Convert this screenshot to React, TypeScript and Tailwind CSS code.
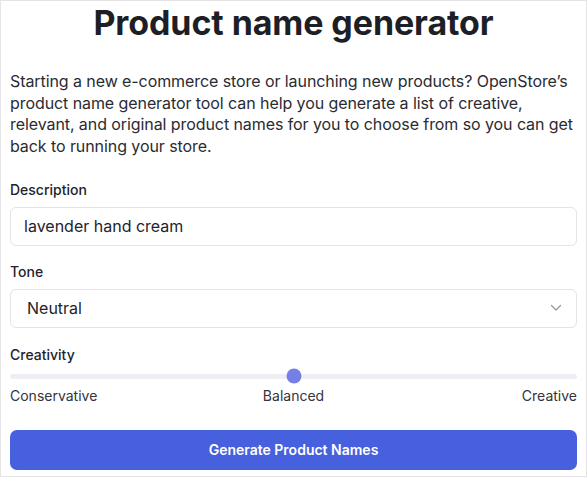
import React from 'react';

export default function App() {
  return (
    <div className="h-[477px] w-[587px] overflow-hidden border border-[#e6e3e6] bg-white font-['Inter',sans-serif] text-[#23232b]">
      <div className="px-[9px]">
        <h1 className="mt-[2px] text-center text-[34px] font-bold leading-[40px] tracking-[-0.1px] text-[#1e1f26]">
          Product name generator
        </h1>
        <p className="mt-[28px] text-[16px] leading-[21.7px] tracking-[-0.08px] text-[#2a2b33]">
          Starting a new e-commerce store or launching new products? OpenStore’s product name generator tool can help you generate a list of creative, relevant, and original product names for you to choose from so you can get back to running your store.
        </p>

        <label className="mt-[22px] block text-[14px] font-medium leading-[20px]">Description</label>
        <div className="mt-[7px] flex h-[39px] items-center rounded-[6px] border border-[#e3e3ea] px-[13px] text-[16px]">
          lavender hand cream
        </div>

        <label className="mt-[16px] block text-[14px] font-medium leading-[20px]">Tone</label>
        <div className="mt-[7px] flex h-[39px] items-center justify-between rounded-[6px] border border-[#e3e3ea] pl-[16px] pr-[14px] text-[16px]">
          <span>Neutral</span>
          <svg width="12" height="8" viewBox="0 0 12 8" fill="none">
            <path d="M1.5 1.5 6 6l4.5-4.5" stroke="#9a9aa5" strokeWidth="1.4" strokeLinecap="round" strokeLinejoin="round" />
          </svg>
        </div>

        <label className="mt-[17px] block text-[14px] font-medium leading-[20px]">Creativity</label>
        <div className="relative mt-[9px] h-[5px] rounded-full bg-[#efeff3]">
          <div className="absolute left-1/2 top-1/2 h-[15px] w-[15px] -translate-x-1/2 -translate-y-1/2 rounded-full bg-[#7480e6]" />
        </div>
        <div className="mt-[7px] grid grid-cols-3 text-[14px] leading-[20px] text-[#33343c]">
          <span>Conservative</span>
          <span className="text-center">Balanced</span>
          <span className="text-right">Creative</span>
        </div>

        <button className="mt-[24px] flex h-[40px] w-full items-center justify-center rounded-[7px] bg-[#4660de] text-[14px] font-semibold text-white">
          Generate Product Names
        </button>
      </div>
    </div>
  );
}
